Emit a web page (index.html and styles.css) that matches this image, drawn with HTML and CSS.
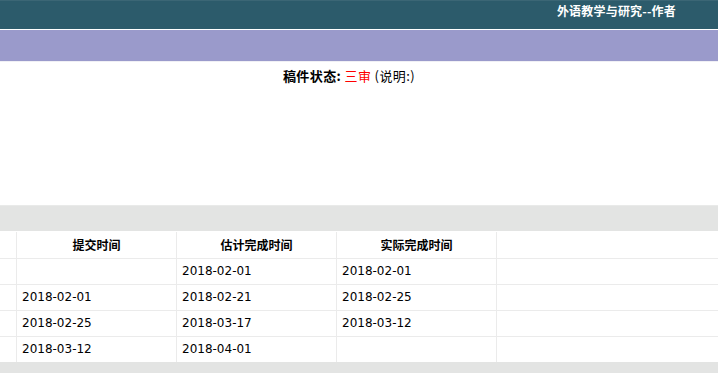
FILE: index.html
```html
<!DOCTYPE html>
<html lang="zh-CN">
<head>
<meta charset="utf-8">
<title>外语教学与研究--作者</title>
<link rel="stylesheet" href="styles.css">
</head>
<body>
<header class="topbar">
  <div class="site-title">外语教学与研究--作者</div>
</header>
<div class="navband"></div>
<main class="content">
  <p class="status"><b>稿件状态:</b> <span class="status-value">三审</span> (说明:)</p>
</main>
<div class="section-bar"></div>
<table class="flow">
  <colgroup>
    <col class="c0"><col class="c1"><col class="c2"><col class="c3"><col class="c4">
  </colgroup>
  <thead>
    <tr><th></th><th>提交时间</th><th>估计完成时间</th><th>实际完成时间</th><th></th></tr>
  </thead>
  <tbody>
    <tr><td></td><td></td><td>2018-02-01</td><td>2018-02-01</td><td></td></tr>
    <tr><td></td><td>2018-02-01</td><td>2018-02-21</td><td>2018-02-25</td><td></td></tr>
    <tr><td></td><td>2018-02-25</td><td>2018-03-17</td><td>2018-03-12</td><td></td></tr>
    <tr><td></td><td>2018-03-12</td><td>2018-04-01</td><td></td><td></td></tr>
  </tbody>
</table>
<div class="footer-bar"></div>
</body>
</html>
```
FILE: styles.css
```css
html, body {
  margin: 0;
  padding: 0;
  background: #fff;
  overflow: hidden;
}
body {
  font-family: "Noto Sans CJK SC", "DejaVu Sans", sans-serif;
  color: #000;
}
.topbar {
  height: 28px;
  background: #2c5b6b;
  border-top: 1px solid #3b6675;
  border-bottom: 1px solid #ffffff;
  display: flex;
  justify-content: flex-end;
  align-items: center;
  padding-right: 42px;
}
.site-title {
  color: #fff;
  font-weight: bold;
  font-size: 12px;
  line-height: 18px;
  margin-top: -8px;
  letter-spacing: 0.2px;
}
.navband {
  height: 31px;
  background: #9a9acb;
  border-bottom: 1px solid #f0f0f5;
}
.content {
  height: 143px;
}
.status {
  margin: 0;
  padding-top: 4px;
  padding-right: 20px;
  text-align: center;
  font-size: 13px;
  line-height: 20px;
  letter-spacing: 0.4px;
}
.status b { font-weight: bold; }
.status-value { color: #f00; }
.section-bar {
  height: 25px;
  background: #e3e4e3;
  border-top: 1px solid #e9eae9;
  margin-bottom: 1px;
}
.flow {
  border-collapse: collapse;
  width: 736px;
  margin-left: -1px;
  table-layout: fixed;
  font-size: 12px;
}
.c0 { width: 17px; }
.c1, .c2, .c3 { width: 160px; }
.flow th, .flow td {
  border: 1px solid #ebebeb;
  height: 26px;
  padding: 0 5px;
  box-sizing: border-box;
}
.flow th {
  font-family: "Noto Sans CJK SC", sans-serif;
  font-weight: bold;
  text-align: center;
  border-top: none;
}
.flow td {
  font-family: "DejaVu Sans", Verdana, sans-serif;
  text-align: left;
}
.flow tbody tr:last-child td { border-bottom: none; }
.footer-bar {
  height: 20px;
  background: #e3e4e3;
}
```
